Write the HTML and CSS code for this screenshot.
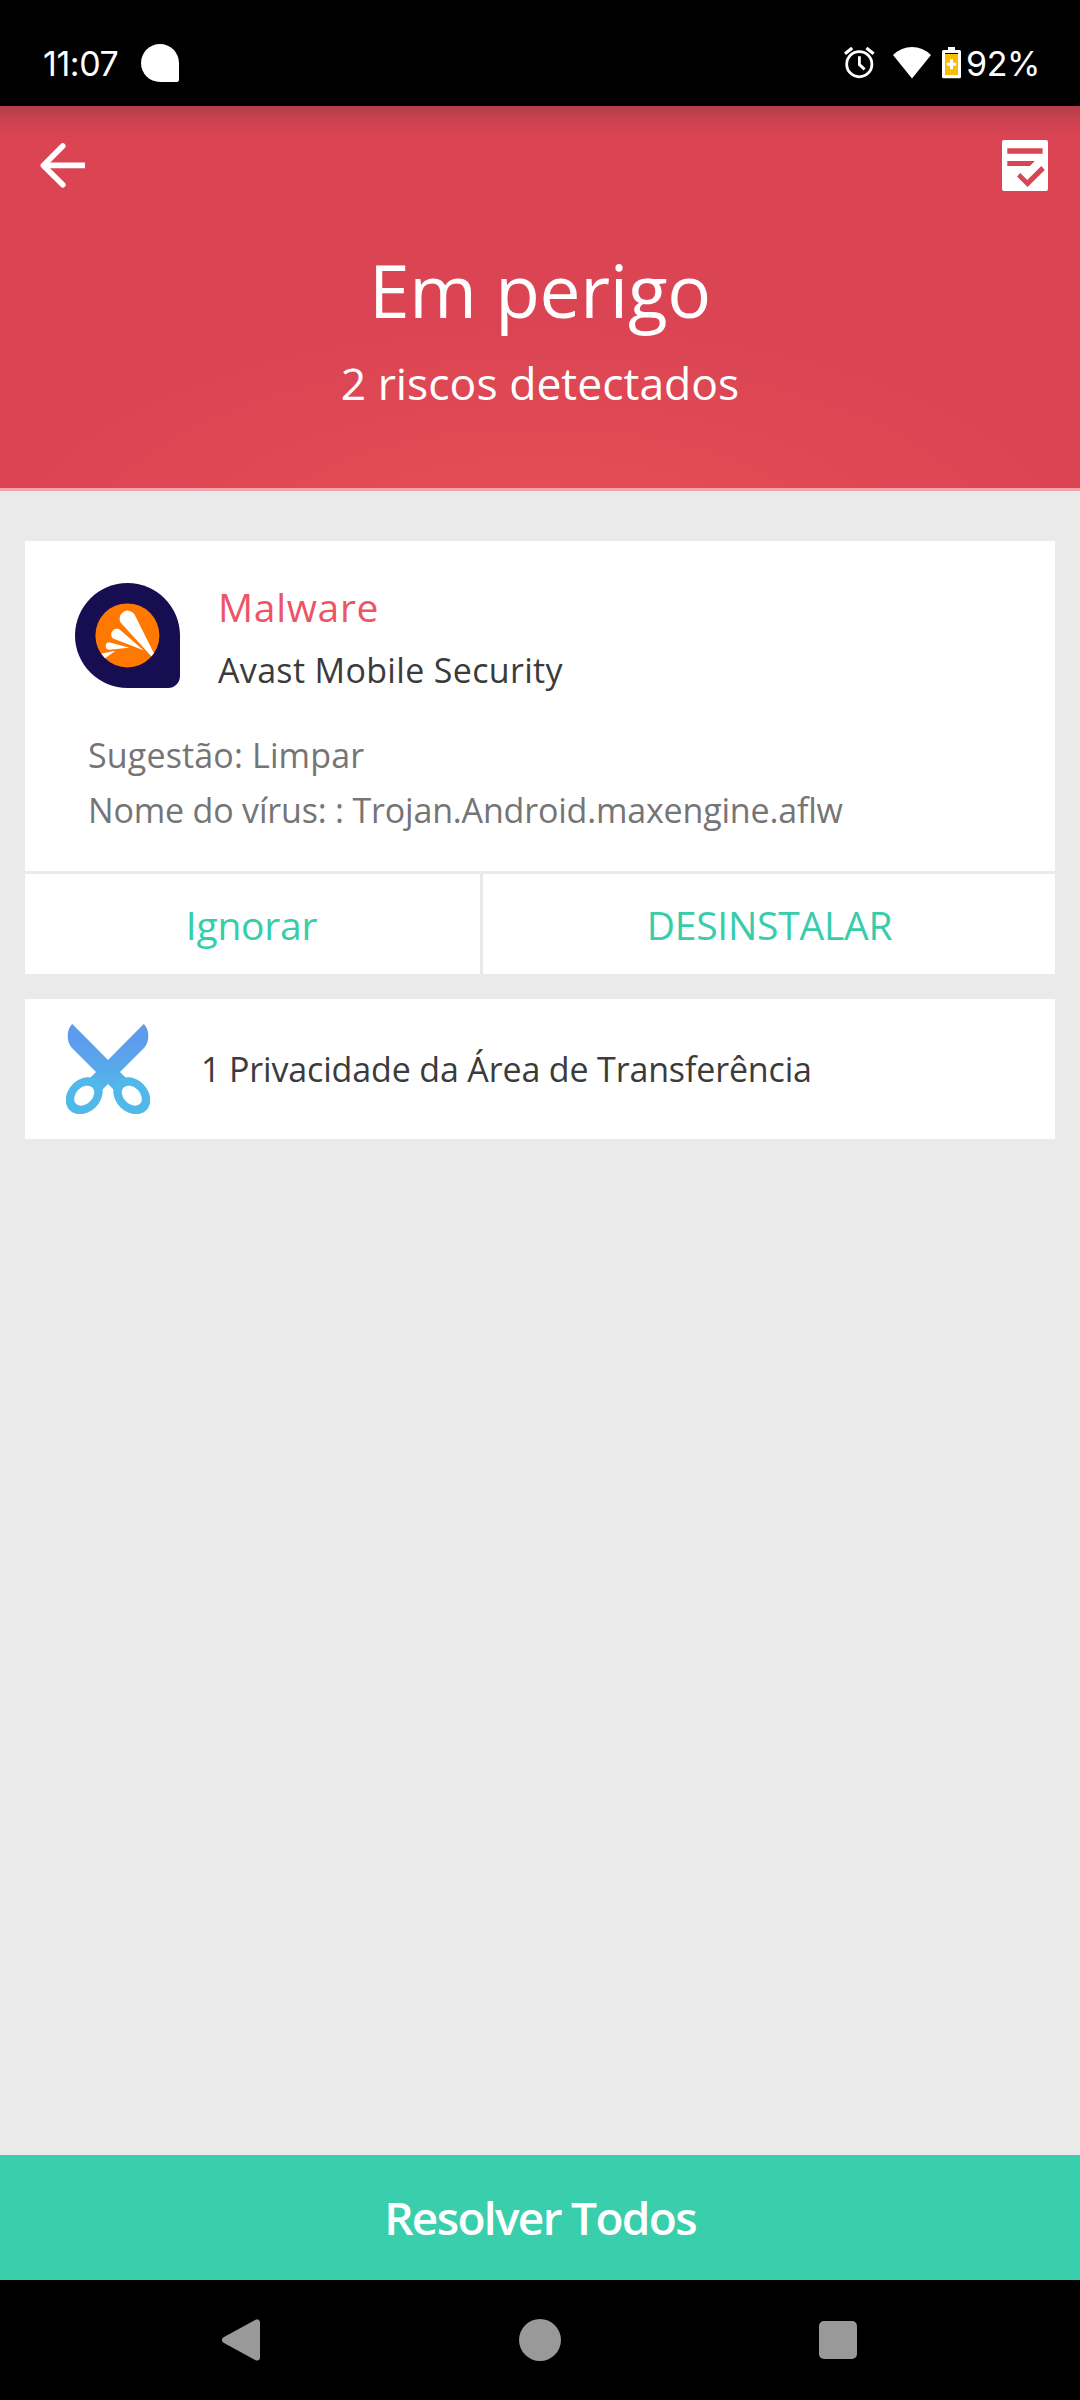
FILE: index.html
```
<!DOCTYPE html>
<html lang="pt">
<head>
<meta charset="utf-8">
<title>Em perigo</title>
<link rel="stylesheet" href="styles.css">
</head>
<body>
<div class="screen">
  <div class="status">
    <span class="status-time">11:07</span>
    <svg width="38" height="38" viewBox="0 0 38 38"><path d="M19 0A19 19 0 0 1 38 19V35.5A2.5 2.5 0 0 1 35.5 38H19A19 19 0 0 1 19 0Z" fill="#fff"/></svg>
    <div class="status-right">
      <svg class="alarm" width="31" height="32" viewBox="0 0 31 32" fill="none" stroke="#fff">
        <circle cx="15.3" cy="17.2" r="12.6" stroke-width="2.8"/>
        <path d="M1 6.8L8.2 1M29.6 6.8L22.4 1" stroke-width="3.2"/>
        <path d="M15.4 9.2V17.6L20.6 22.4" stroke-width="2.8"/>
      </svg>
      <svg class="wifi" width="38" height="32" viewBox="0 0 38 32"><path d="M0 8Q8.500 0 19 0T38 8L19 31.500Z" fill="#fff"/></svg>
      <svg class="battery" width="19" height="32" viewBox="0 0 19 32">
        <path d="M6 0H13V3H17.500Q19 3 19 4.500V29.800Q19 31.300 17.500 31.300H1.500Q0 31.300 0 29.800V4.500Q0 3 1.500 3H6Z" fill="#fff"/>
        <path d="M3 6H16V7H3Z" fill="#000"/>
        <path d="M3 7H16V28H3Z" fill="#fbbc04"/>
        <path d="M8 12.300H11V15.800H14.200V18.800H11V22.300H8V18.800H4.800V15.800H8Z" fill="#fff"/>
      </svg>
      <span class="status-pct">92%</span>
    </div>
  </div>

  <header class="hero">
    <div class="appbar">
      <svg width="45" height="45" viewBox="0 0 45 45" fill="none" stroke="#fff" stroke-width="5.600"><path d="M22.800 3L3.400 22.400L22.800 41.800" stroke-linecap="round" stroke-linejoin="round"/><path d="M4 22.400H45"/></svg>
      <svg width="46" height="51" viewBox="0 0 46 51">
        <rect width="46" height="51" rx="2" fill="#fff"/>
        <path d="M5.300 8.300H40.600V13.700H5.300ZM5.300 21H32.800L28 26H5.300ZM18.300 33L25.300 40L39.300 26L42.800 30L25.600 47L15 36.500Z" fill="#db4453"/>
      </svg>
    </div>
    <h1 class="title">Em perigo</h1>
    <p class="subtitle">2 riscos detectados</p>
  </header>

  <main class="content">
    <section class="card">
      <div class="threat">
        <svg class="app-icon" width="105" height="105" viewBox="0 0 105 105">
          <defs><clipPath id="disc"><circle cx="52.400" cy="52.400" r="32"/></clipPath></defs>
          <path d="M52.500 0A52.500 52.500 0 0 1 105 52.500V93A12 12 0 0 1 93 105H52.500A52.500 52.500 0 0 1 52.500 0Z" fill="#160e50"/>
          <circle cx="52.400" cy="52.400" r="32" fill="#ff7900"/>
          <g clip-path="url(#disc)" fill="#fff">
            <path d="M45.600 39.600A8 8 0 1 1 59.700 31.800L79.500 71.500L77 74Z"/>
            <path d="M38 55.600A5.500 5.500 0 1 1 45.500 47.300L68.500 67.200Z"/>
            <path d="M34 66.800A3.700 3.700 0 1 1 35 59.400L54.500 64.700Z"/>
            <path d="M40.500 67.800L26 70.800L29 76Z"/>
          </g>
        </svg>
        <div>
          <div class="threat-type">Malware</div>
          <div class="threat-app">Avast Mobile Security</div>
        </div>
      </div>
      <div class="details">
        <p class="advice">Sugestão: Limpar</p>
        <p class="virus">Nome do vírus: : Trojan.Android.maxengine.aflw</p>
      </div>
      <div class="actions">
        <div class="action ignore">Ignorar</div>
        <div class="action uninstall">DESINSTALAR</div>
      </div>
    </section>

    <section class="card privacy">
      <svg width="84" height="90" viewBox="0 0 84 90">
        <defs><linearGradient id="blue" gradientUnits="userSpaceOnUse" x1="0" y1="18" x2="0" y2="88"><stop offset="0" stop-color="#5d9cec"/><stop offset="1" stop-color="#4fc1e9"/></linearGradient></defs>
        <path d="M6.300 0L42 36L77.700 0Q82.300 4 82.300 12Q82.300 19 78.500 23.500L54 48L60.500 54.500L48 66L42 60L36 66L23.500 54.500L30 48L5.500 23.500Q1.700 19 1.700 12Q1.700 4 6.300 0Z" fill="url(#blue)"/>
        <path transform="rotate(-45 18.200 71.700)" d="M-2.300 71.700a20.500 16.200 0 1 0 41 0a20.500 16.200 0 1 0 -41 0M6.700 71.700a11.500 8.300 0 1 1 23 0a11.500 8.300 0 1 1 -23 0" fill="#50b9ea" fill-rule="evenodd"/>
        <path transform="rotate(45 65.800 71.700)" d="M45.300 71.700a20.500 16.200 0 1 0 41 0a20.500 16.200 0 1 0 -41 0M54.300 71.700a11.500 8.300 0 1 1 23 0a11.500 8.300 0 1 1 -23 0" fill="#50b9ea" fill-rule="evenodd"/>
      </svg>
      <span class="privacy-text">1 Privacidade da Área de Transferência</span>
    </section>
  </main>

  <div class="resolve">Resolver Todos</div>

  <nav class="nav">
    <svg width="42" height="42" viewBox="0 0 42 42"><path d="M37 3.500V38.500L5 21Z" fill="#999" stroke="#999" stroke-width="6" stroke-linejoin="round"/></svg>
    <svg width="42" height="42" viewBox="0 0 42 42"><circle cx="21" cy="21" r="21" fill="#999"/></svg>
    <svg width="42" height="42" viewBox="0 0 42 42"><rect x="2" y="2" width="38" height="38" rx="5" fill="#999"/></svg>
  </nav>
</div>
</body>
</html>
```
FILE: styles.css
```
* { box-sizing: border-box; margin: 0; padding: 0; }
body { background: #000; font-family: "Open Sans", "Noto Sans", sans-serif; }
svg { display: block; flex: none; }

.screen { width: 1080px; height: 2400px; display: flex; flex-direction: column; background: #eaeaea; overflow: hidden; }

.status { height: 106px; padding: 20px 42px 0 43px; display: flex; align-items: center; background: #000; color: #fff; font: 400 34px/46px "Inter", sans-serif; letter-spacing: -0.43px; }
.status-time { width: 98px; padding-top: 2px; }
.status-right { margin-left: auto; display: flex; align-items: center; }
.alarm { margin-right: 18px; }
.wifi { margin-right: 11px; }
.battery { margin-right: 5px; }
.status-pct { width: 72px; padding-top: 2px; }

.hero {
  height: 385px;
  border-bottom: 3px solid #f1a5aa;
  color: #fff;
  text-align: center;
  background:
    linear-gradient(rgba(40, 40, 40, .22), rgba(40, 40, 40, .08) 14px, rgba(40, 40, 40, 0) 34px),
    radial-gradient(540px 235px at 540px 454px, #e75153, #db4453);
}
.appbar { height: 118px; padding: 0 32px 0 40px; display: flex; align-items: center; justify-content: space-between; }
.title { margin-top: 16px; font-weight: 400; font-size: 73px; line-height: 100px; letter-spacing: -.3px; }
.subtitle { margin-top: 13px; font-size: 44.5px; line-height: 60px; }

.content { flex: 1; padding: 50px 25px 0; display: flex; flex-direction: column; gap: 25px; }
.card { background: #fff; }

.threat { padding: 38px 50px 0; display: flex; gap: 38px; }
.app-icon { margin-top: 4px; }
.threat-type { color: #ed5565; font-size: 39px; line-height: 56px; letter-spacing: .7px; }
.threat-app { margin-top: 7px; color: #3b3b3b; font-size: 34px; line-height: 56px; letter-spacing: .33px; }

.details { padding: 30px 62px 33px 63px; color: #757575; font-size: 34px; line-height: 55px; white-space: nowrap; }
.advice { letter-spacing: .15px; }
.virus { letter-spacing: -.18px; }

.actions { height: 103px; border-top: 3px solid #eaeaea; display: flex; }
.action { flex: 1; display: flex; align-items: center; justify-content: center; color: #37cdaa; font-size: 39px; letter-spacing: -.23px; }
.ignore { flex: none; width: 458px; padding-right: 2px; border-right: 3px solid #eaeaea; }
.uninstall { padding-left: 1px; }

.privacy { height: 140px; padding-left: 41px; display: flex; align-items: center; gap: 51px; }
.privacy-text { color: #3b3b3b; font-size: 34px; letter-spacing: -.15px; }

.resolve { height: 125px; padding-bottom: 2px; display: flex; align-items: center; justify-content: center; background: #39ceac; color: #fff; font-size: 46px; font-weight: 600; letter-spacing: -1.68px; }

.nav { height: 120px; padding: 0 221px 0 220px; display: flex; align-items: center; justify-content: space-between; background: #000; }
```
